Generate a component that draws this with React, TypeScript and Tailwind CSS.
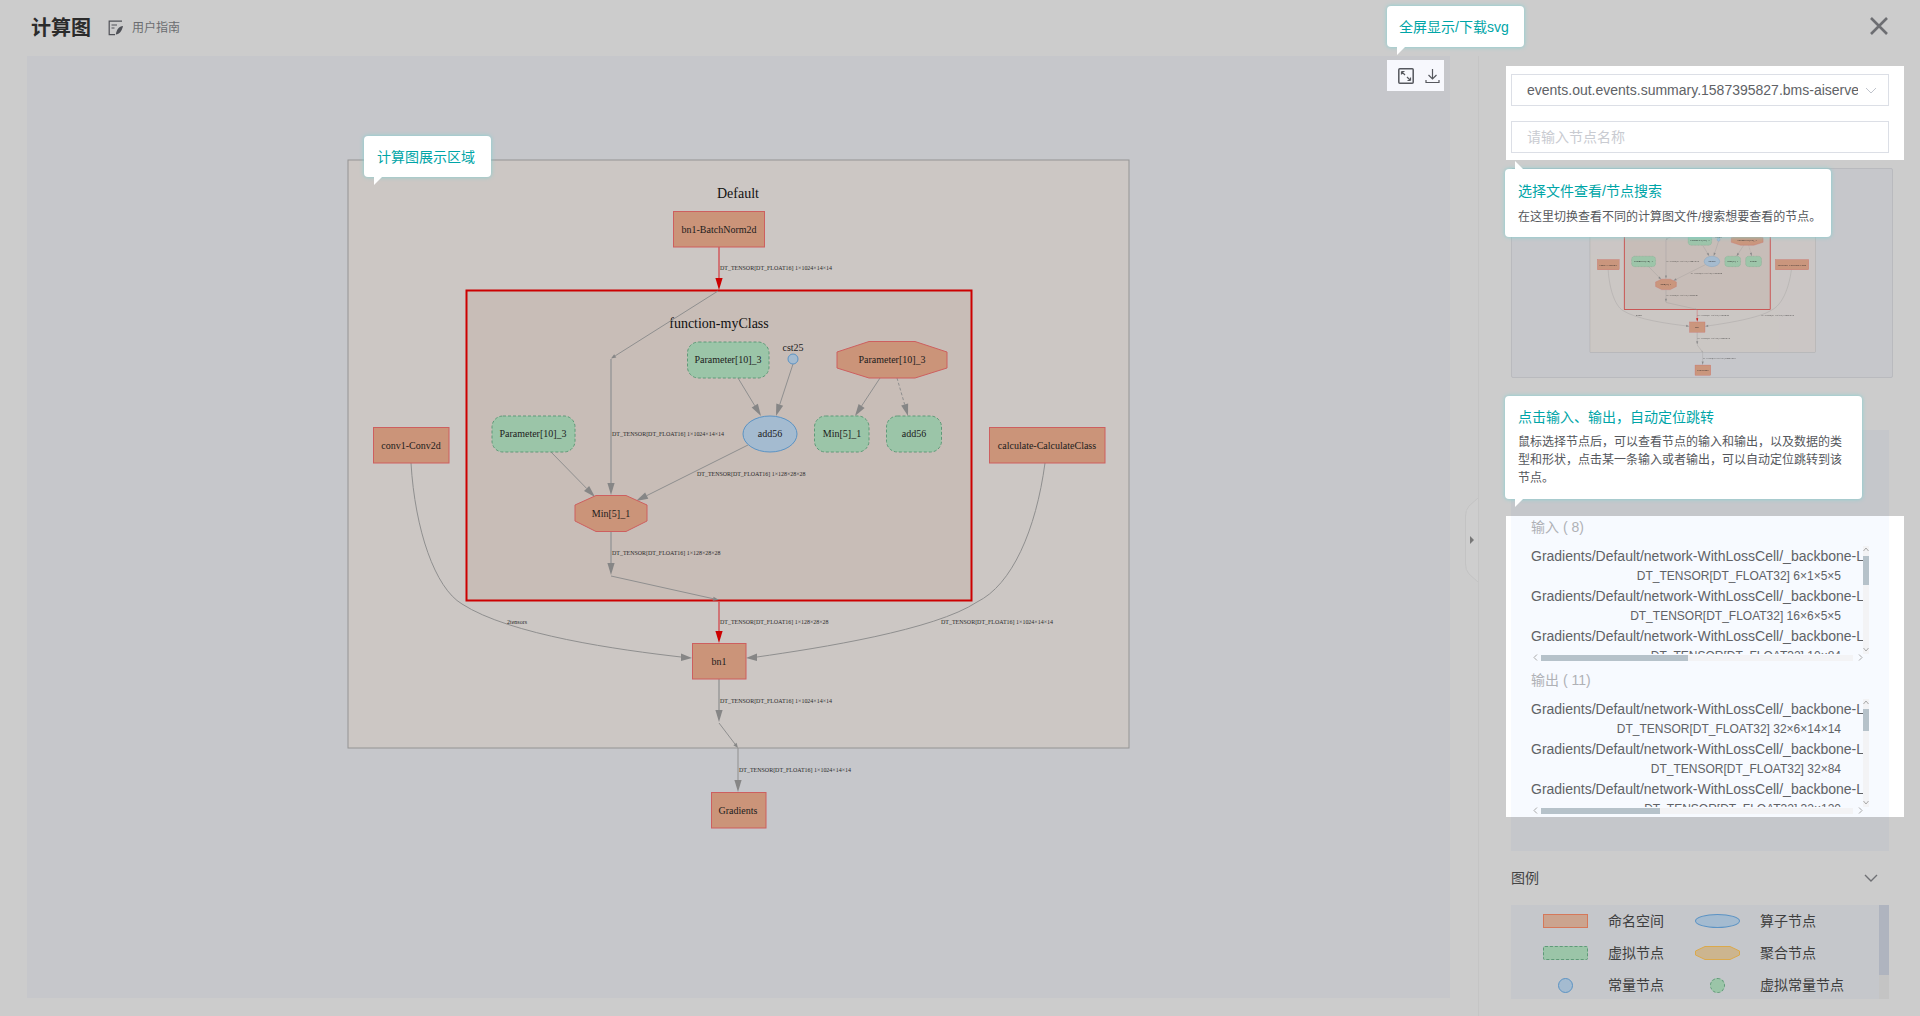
import React from "react";

const ui = { fontFamily: '"Liberation Sans","Noto Sans CJK SC",sans-serif' };
const serif = '"Liberation Serif","Noto Sans CJK SC",serif';

function Edge({ x1, y1, x2, y2, w = 1, color = "#8f8f8f", head = "#868686", size = 12, half = 3.6, dash }: { x1: number; y1: number; x2: number; y2: number; w?: number; color?: string; head?: string; size?: number; half?: number; dash?: string }) {
  const len = Math.hypot(x2 - x1, y2 - y1);
  const ux = (x2 - x1) / len;
  const uy = (y2 - y1) / len;
  const bx = x2 - ux * size;
  const by = y2 - uy * size;
  return (
    <g>
      <line x1={x1} y1={y1} x2={bx} y2={by} stroke={color} strokeWidth={w} strokeDasharray={dash} />
      <polygon points={`${x2},${y2} ${bx - uy * half},${by + ux * half} ${bx + uy * half},${by - ux * half}`} fill={head} />
    </g>
  );
}

function Lbl({ x, y, t, len }: { x: number; y: number; t: string; len: number }) {
  return (
    <text x={x} y={y + 2} fontFamily={serif} fontSize={5.6} fill="#2a2a2a" textLength={len} lengthAdjust="spacingAndGlyphs">
      {t}
    </text>
  );
}

function Name({ x, y, t, size = 10 }: { x: number; y: number; t: string; size?: number }) {
  return (
    <text x={x} y={y + 1 + size * 0.33} textAnchor="middle" fontFamily={serif} fontSize={size} fill="#1c1c1c">
      {t}
    </text>
  );
}

const red = { fill: "#cb9479", stroke: "#cd5f5f", strokeWidth: 1 };
const green = { fill: "#9bc5a8", stroke: "#5f9a78", strokeWidth: 1, strokeDasharray: "3 2" };
const blue = { fill: "#a4bbd0", stroke: "#5b93c4", strokeWidth: 1 };

function Graph() {
  return (
    <g>
      <rect x={348} y={160} width={781} height={588} fill="#ccc7c4" stroke="#949494" strokeWidth={1} />
      <text x={738} y={198} textAnchor="middle" fontFamily={serif} fontSize={14} fill="#111">Default</text>
      <rect x={466.5} y={290.5} width={505} height={310} fill="#c8bdb7" stroke="#cc0000" strokeWidth={2} />
      <text x={719} y={328} textAnchor="middle" fontFamily={serif} fontSize={14} fill="#111">function-myClass</text>

      <Edge x1={719} y1={247} x2={719} y2={290} w={1.5} color="#d2585d" head="#cc0000" />
      <Lbl x={720} y={268} t="DT_TENSOR[DT_FLOAT16] 1×1024×14×14" len={112} />
      <Edge x1={718} y1={291} x2={611} y2={358.5} size={5} half={2} />
      <Edge x1={611} y1={359} x2={611} y2={495} w={1.5} color="#9a9a9a" />
      <Lbl x={612} y={434} t="DT_TENSOR[DT_FLOAT16] 1×1024×14×14" len={112} />
      <Edge x1={738} y1={378} x2={761} y2={416} />
      <Edge x1={793} y1={364} x2={776} y2={416} />
      <Edge x1={551} y1={452} x2={595} y2={497} />
      <Edge x1={748} y1={445} x2={636} y2={501} />
      <Lbl x={697} y={474} t="DT_TENSOR[DT_FLOAT16] 1×128×28×28" len={108.5} />
      <Edge x1={880} y1={378} x2={855} y2={416} />
      <Edge x1={897} y1={378} x2={908} y2={416} dash="3 2" />
      <Edge x1={611} y1={532} x2={611} y2={575} w={1.5} color="#9a9a9a" />
      <Lbl x={612} y={553} t="DT_TENSOR[DT_FLOAT16] 1×128×28×28" len={108.5} />
      <Edge x1={611} y1={576} x2={719} y2={600} size={6} half={2} />
      <Edge x1={719} y1={601} x2={719} y2={643} w={1.5} color="#d2585d" head="#cc0000" />
      <Lbl x={720} y={622} t="DT_TENSOR[DT_FLOAT16] 1×128×28×28" len={108.5} />
      <Edge x1={719} y1={679} x2={719} y2={722} w={1.5} color="#9a9a9a" />
      <Lbl x={720} y={701} t="DT_TENSOR[DT_FLOAT16] 1×1024×14×14" len={112} />
      <Edge x1={719} y1={723} x2={738} y2={748} size={5} half={2} />
      <Edge x1={738} y1={748} x2={738} y2={792} />
      <Lbl x={739} y={770} t="DT_TENSOR[DT_FLOAT16] 1×1024×14×14" len={112} />

      <path d="M411 463 C415 530 435 588 462 604 C510 635 620 650 681 657" fill="none" stroke="#8f8f8f" strokeWidth={1} />
      <polygon points="692,658 681,653.5 681,661" fill="#868686" />
      <Lbl x={507} y={622} t="2tensors" len={20} />
      <path d="M1045 463 C1036 530 1012 585 977 602 C935 630 820 648 757 657" fill="none" stroke="#8f8f8f" strokeWidth={1} />
      <polygon points="746,658 757,653.5 757,661" fill="#868686" />
      <Lbl x={941} y={622} t="DT_TENSOR[DT_FLOAT16] 1×1024×14×14" len={112} />

      <rect x={673.5} y={211.5} width={91} height={35.5} {...red} />
      <Name x={719} y={229} t="bn1-BatchNorm2d" />
      <rect x={373.5} y={427.5} width={75.5} height={35.5} {...red} />
      <Name x={411} y={445} t="conv1-Conv2d" />
      <rect x={989.5} y={427.5} width={115.5} height={35.5} {...red} />
      <Name x={1047} y={445} t="calculate-CalculateClass" />
      <rect x={692.5} y={643.5} width={53.5} height={35.5} {...red} />
      <Name x={719} y={661} t="bn1" />
      <rect x={711.5} y={792.5} width={54.5} height={35.5} {...red} />
      <Name x={738} y={810} t="Gradients" />

      <rect x={687.5} y={342} width={81.5} height={36} rx={11} {...green} />
      <Name x={728} y={359} t="Parameter[10]_3" />
      <rect x={492} y={416} width={83} height={36} rx={11} {...green} />
      <Name x={533} y={433} t="Parameter[10]_3" />
      <rect x={814.5} y={416} width={54.5} height={36} rx={11} {...green} />
      <Name x={842} y={433} t="Min[5]_1" />
      <rect x={886.5} y={416} width={55} height={36} rx={11} {...green} />
      <Name x={914} y={433} t="add56" />

      <ellipse cx={770} cy={434} rx={27} ry={18} {...blue} />
      <Name x={770} y={433} t="add56" />
      <circle cx={793} cy={359} r={5} {...blue} />
      <Name x={793} y={347} t="cst25" />

      <polygon points="837,352 869,341.5 915,341.5 947,352 947,368 915,378 869,378 837,368" {...red} />
      <Name x={892} y={359} t="Parameter[10]_3" />
      <polygon points="575,505 596,495.5 626,495.5 647,505 647,521 626,531.5 596,531.5 575,521" {...red} />
      <Name x={611} y={513} t="Min[5]_1" />
    </g>
  );
}

function Bubble({ className, arrow, children }: { className: string; arrow: "down" | "up"; children: React.ReactNode }) {
  return (
    <div className={`absolute bg-white rounded-[4px] shadow-[0_0_4px_#7fd2d3] z-20 ${className}`}>
      {arrow === "down" ? (
        <svg className="absolute left-[10px] -bottom-[8px]" width="8" height="8"><polygon points="0,0 8,0 0,8" fill="#fff" /></svg>
      ) : (
        <svg className="absolute left-[10px] -top-[8px]" width="8" height="8"><polygon points="0,0 0,8 8,8" fill="#fff" /></svg>
      )}
      {children}
    </div>
  );
}

const repeat = "Gradients/Default/network-WithLossCell/_backbone-LeNet5/conv1-Conv2d";

function IOList({ types, h, thumbH, thumbTop, hThumb }: { types: string[]; h: number; thumbH: number; thumbTop: number; hThumb: number }) {
  return (
    <div className="relative w-[338px]" style={{ height: h }}>
      <div className="w-[332px] overflow-hidden text-[14px] leading-[20px] text-[#606266]" style={{ height: h - 7 }}>
        {types.map((t) => (
          <div key={t}>
            <div className="whitespace-nowrap">{repeat}</div>
            <div className="whitespace-nowrap text-right text-[12px] pr-[22px]">{t}</div>
          </div>
        ))}
      </div>
      <div className="absolute right-0 top-0 w-[6px] bg-[#f3f3f5]" style={{ height: h - 7 }}>
        <div className="absolute w-full bg-[#b6c2ca]" style={{ top: thumbTop, height: thumbH }} />
      </div>
      <svg className="absolute right-0 top-[1px]" width="6" height="5"><path d="M0.5 4 L3 1 L5.5 4" fill="none" stroke="#a8a8a8" /></svg>
      <svg className="absolute right-0 bottom-[9px]" width="6" height="5"><path d="M0.5 1 L3 4 L5.5 1" fill="none" stroke="#a8a8a8" /></svg>
      <div className="absolute left-[10px] bottom-0 w-[312px] h-[6px] bg-[#f3f3f5]">
        <div className="h-full bg-[#b6c2ca]" style={{ width: hThumb }} />
      </div>
      <svg className="absolute left-[2px] bottom-0" width="5" height="7"><path d="M4 0.5 L1 3.5 L4 6.5" fill="none" stroke="#a8a8a8" /></svg>
      <svg className="absolute right-[6px] bottom-0" width="5" height="7"><path d="M1 0.5 L4 3.5 L1 6.5" fill="none" stroke="#a8a8a8" /></svg>
    </div>
  );
}

function LegendRow({ icon1, t1, icon2, t2 }: { icon1: React.ReactNode; t1: string; icon2: React.ReactNode; t2: string }) {
  return (
    <div className="flex items-center h-[32px]">
      <div className="w-[45px] ml-[32px] flex justify-center">{icon1}</div>
      <div className="w-[87px] ml-[20px] text-[14px] text-[#3e3e3e] whitespace-nowrap">{t1}</div>
      <div className="w-[45px] flex justify-center">{icon2}</div>
      <div className="ml-[20px] text-[14px] text-[#3e3e3e] whitespace-nowrap">{t2}</div>
    </div>
  );
}

export default function App() {
  return (
    <div className="relative w-[1920px] h-[1016px] bg-[#cccccc] overflow-hidden" style={ui}>
      <header className="h-[56px] flex items-center pl-[31px] pb-[1px]">
        <h1 className="text-[20px] font-bold text-[#2b2b2b] leading-none w-[77px]">计算图</h1>
        <svg width="16" height="16" viewBox="0 0 16 16" fill="none" stroke="#4f5157" strokeWidth="1.2" className="mr-[8px]">
          <path d="M14 1.2 H1.2 V14.6 H7" />
          <path d="M3.5 5 H9 M3.5 8 H6.5" />
          <path d="M15 6 C11 6.5 8.5 9.5 7.8 14.5 C11.5 14 14 11 15 6 Z" fill="#4f5157" stroke="none" />
        </svg>
        <span className="text-[12px] text-[#6b6c70]">用户指南</span>
      </header>

      <div className="flex h-[960px]">
        <main className="relative ml-[27px] w-[1423px] h-[942px] bg-[#c6c7cb]">
          <svg width="1423" height="942" viewBox="27 56 1423 942" className="block">
            <Graph />
          </svg>
          <div className="absolute left-[1360px] top-[4px] w-[57px] h-[31px] bg-[#f7f8fd] flex items-center pl-[11px] gap-[11px]">
            <svg width="16" height="16" viewBox="0 0 16 16" fill="none" stroke="#56585e">
              <rect x="0.8" y="0.8" width="14.4" height="14.4" rx="1" strokeWidth="1.5" />
              <path d="M3.5 3.5 L7 7 M3.5 3.5 H6.5 M3.5 3.5 V6.5 M12.5 12.5 L9 9 M12.5 12.5 H9.5 M12.5 12.5 V9.5" strokeWidth="1.2" />
            </svg>
            <svg width="15" height="16" viewBox="0 0 15 16" fill="none" stroke="#56585e" strokeWidth="1.2">
              <path d="M7.5 1 V10.5 M3.5 7 L7.5 11 L11.5 7" />
              <path d="M1 12 V14.5 H14 V12" />
            </svg>
          </div>
        </main>

        <svg width="13" height="84" viewBox="0 0 13 84" className="ml-[15px] mt-[442px] shrink-0">
          <path d="M13 0 L4 8 Q0.5 12 0.5 18 V66 Q0.5 72 4 76 L13 84" fill="#cecece" stroke="#c3c3c3" />
          <polygon points="5,38 9,42 5,46" fill="#777" />
        </svg>

        <aside className="w-[443px] h-[960px] border-l border-[#c5c5c5] pl-[32px]">
          <div className="mt-[10px] -ml-[5px] w-[398px] h-[94px] bg-white pt-[8px] pl-[5px]">
            <div className="w-[378px] h-[32px] border border-[#dcdfe6] flex items-center pl-[15px] text-[14px] text-[#606266] relative overflow-hidden">
              <span className="whitespace-nowrap w-[331px] overflow-hidden">events.out.events.summary.1587395827.bms-aiserver</span>
              <svg className="absolute right-[11px] top-[12px]" width="12" height="7"><path d="M1 1 L6 6 L11 1" fill="none" stroke="#c0c4cc" /></svg>
            </div>
            <div className="w-[378px] h-[32px] mt-[15px] border border-[#dcdfe6] flex items-center pl-[15px] text-[14px] text-[#c9cbd1]">请输入节点名称</div>
          </div>

          <div className="mt-[8px] w-[382px] h-[210px] bg-[#c6c7cb] border border-[#b9babe] rounded-[2px] overflow-hidden">
            <svg width="382" height="210" viewBox="1511 168 382 210" className="block blur-[0.5px] opacity-95">
              <g transform="translate(1488.4 135) scale(0.289)">
                <Graph />
              </g>
            </svg>
          </div>

          <div className="mt-[52px] w-[378px] h-[421px] bg-[#c5c7cb] pt-[86px]">
            <div className="-ml-[5px] w-[398px] h-[301px] bg-white pl-[5px]">
              <div className="w-[378px] h-full bg-[#f7faff] pl-[20px] overflow-hidden">
                <div className="h-[22px] leading-[22px] text-[14px] text-[#afb1b6]">输入 ( 8)</div>
                <div className="mt-[8px]">
                  <IOList h={115} thumbTop={10} thumbH={29} hThumb={147}
                    types={["DT_TENSOR[DT_FLOAT32] 6×1×5×5", "DT_TENSOR[DT_FLOAT32] 16×6×5×5", "DT_TENSOR[DT_FLOAT32] 10×84", "DT_TENSOR[DT_FLOAT32] 120×84"]} />
                </div>
                <div className="mt-[8px] h-[22px] leading-[22px] text-[14px] text-[#afb1b6]">输出 ( 11)</div>
                <div className="mt-[8px]">
                  <IOList h={115} thumbTop={10} thumbH={22} hThumb={119}
                    types={["DT_TENSOR[DT_FLOAT32] 32×6×14×14", "DT_TENSOR[DT_FLOAT32] 32×84", "DT_TENSOR[DT_FLOAT32] 32×120", "DT_TENSOR[DT_FLOAT32] 32×16"]} />
                </div>
              </div>
            </div>
          </div>

          <div className="w-[378px] h-[54px] flex items-center justify-between pr-[11px]">
            <span className="text-[14px] text-[#444]">图例</span>
            <svg width="14" height="8"><path d="M1 1 L7 7 L13 1" fill="none" stroke="#6f7074" strokeWidth="1.4" /></svg>
          </div>

          <div className="w-[378px] h-[94px] bg-[#c5c7cb] flex overflow-hidden">
            <div className="w-[368px]">
              <LegendRow
                icon1={<div className="w-[45px] h-[14px] bg-[#cba48f] border border-[#d5785a]" />}
                t1="命名空间"
                icon2={<div className="w-[45px] h-[14px] rounded-[50%] bg-[#a4bbd0] border border-[#5b93c4]" />}
                t2="算子节点"
              />
              <LegendRow
                icon1={<div className="w-[45px] h-[14px] rounded-[2px] bg-[#9bc5a8] border border-dashed border-[#5f9a78]" />}
                t1="虚拟节点"
                icon2={<svg width="45" height="14"><polygon points="0.5,5 10,0.5 35,0.5 44.5,5 44.5,9 35,13.5 10,13.5 0.5,9" fill="#ccb58f" stroke="#dba94b" /></svg>}
                t2="聚合节点"
              />
              <LegendRow
                icon1={<div className="w-[15px] h-[15px] rounded-full bg-[#a4bbd0] border border-[#5b93c4]" />}
                t1="常量节点"
                icon2={<div className="w-[15px] h-[15px] rounded-full bg-[#9bc5a8] border border-dashed border-[#5f9a78]" />}
                t2="虚拟常量节点"
              />
            </div>
            <div className="w-[10px] h-full bg-[#c4c4c4]">
              <div className="w-full h-[70px] bg-[#afb4bf]" />
            </div>
          </div>
        </aside>
      </div>

      <svg className="absolute left-[1870px] top-[17px]" width="18" height="18" viewBox="0 0 18 18"><path d="M1 1 L17 17 M17 1 L1 17" stroke="#6d6e72" strokeWidth="2.6" fill="none" /></svg>

      <Bubble className="left-[1387px] top-[6px] w-[137px] h-[41px] flex items-center pl-[12px] pt-[1px]" arrow="down">
        <span className="text-[14px] text-[#00a5a7] whitespace-nowrap">全屏显示/下载svg</span>
      </Bubble>
      <Bubble className="left-[364px] top-[136px] w-[127px] h-[41px] flex items-center pl-[13px] pt-[1px]" arrow="down">
        <span className="text-[14px] text-[#00a5a7] whitespace-nowrap">计算图展示区域</span>
      </Bubble>
      <Bubble className="left-[1505px] top-[169px] w-[326px] h-[68px] pl-[13px] pt-[12px]" arrow="up">
        <div className="text-[14px] leading-[20px] text-[#00a5a7]">选择文件查看/节点搜索</div>
        <div className="mt-[7px] text-[12px] leading-[18px] text-[#55575c] whitespace-nowrap">在这里切换查看不同的计算图文件/搜索想要查看的节点。</div>
      </Bubble>
      <Bubble className="left-[1505px] top-[396px] w-[357px] h-[103px] pl-[13px] pt-[11px]" arrow="down">
        <div className="text-[14px] leading-[20px] text-[#00a5a7]">点击输入、输出，自动定位跳转</div>
        <div className="mt-[6px] text-[12px] leading-[18px] text-[#55575c] w-[330px]">鼠标选择节点后，可以查看节点的输入和输出，以及数据的类型和形状，点击某一条输入或者输出，可以自动定位跳转到该节点。</div>
      </Bubble>
    </div>
  );
}
